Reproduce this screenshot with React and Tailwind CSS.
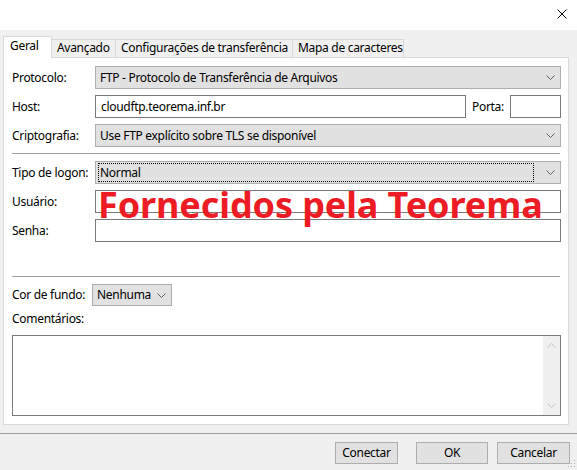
import React from "react";

const Chevron = ({ color = "#606060" }) => (
  <svg width="9" height="5" viewBox="0 0 9 5" className="shrink-0">
    <polyline points="0.5,0.5 4.5,4.5 8.5,0.5" fill="none" stroke={color} strokeWidth="1" />
  </svg>
);

function Select({ children, className = "", focused = false, h = "h-[23px]" }) {
  return (
    <div className={`flex items-center ${h} bg-[#e1e1e1] border border-[#adadad] ${className}`}>
      {focused ? (
        <div className="flex-1 h-[19px] ml-[2px] mr-[12px] border border-dotted border-black flex items-center pl-[1px] leading-none whitespace-nowrap">
          {children}
        </div>
      ) : (
        <div className="flex-1 pl-[4px] leading-none whitespace-nowrap">{children}</div>
      )}
      <div className="mr-[5px] flex items-center">
        <Chevron />
      </div>
    </div>
  );
}

function Input({ children, className = "" }) {
  return (
    <div className={`flex items-center h-[23px] bg-white border border-[#7a7a7a] pl-[5px] leading-none whitespace-nowrap ${className}`}>
      {children}
    </div>
  );
}

function Row({ label, children, className = "" }) {
  return (
    <div className={`flex items-center ${className}`}>
      <span className="w-[83px] shrink-0 leading-none whitespace-nowrap">{label}</span>
      {children}
    </div>
  );
}

export default function App() {
  return (
    <div
      className="relative w-[577px] h-[470px] bg-[#f0f0f0] overflow-hidden text-[12px] tracking-[-0.3px] text-black"
      style={{ fontFamily: '"Noto Sans", "Open Sans", sans-serif' }}
    >
      {/* title bar */}
      <div className="h-[30px] bg-white flex items-start justify-end pr-[10px] pt-[9px]">
        <svg width="10" height="10" viewBox="0 0 10 10">
          <path d="M0.5 0.5 L9.5 9.5 M9.5 0.5 L0.5 9.5" stroke="#000" strokeWidth="1" />
        </svg>
      </div>

      {/* tabs */}
      <div className="pl-[3px] pt-[6px] flex items-end h-[27px] whitespace-nowrap">
        <div className="relative z-10 -mb-px h-[22px] w-[49px] bg-white border border-[#d9d9d9] border-b-0 pl-[6px] pt-[3px] leading-none">
          Geral
        </div>
        <div className="h-[18px] w-[64px] border border-[#d9d9d9] border-l-0 border-b-0 pl-[5px] pt-[2px] leading-none">
          Avançado
        </div>
        <div className="h-[18px] w-[177px] border border-[#d9d9d9] border-l-0 border-b-0 pl-[5px] pt-[2px] leading-none">
          Configurações de transferência
        </div>
        <div className="h-[18px] w-[111px] border border-[#d9d9d9] border-l-0 border-b-0 pl-[5px] pt-[2px] leading-none">
          Mapa de caracteres
        </div>
      </div>

      {/* panel */}
      <div className="ml-[3px] w-[566px] h-[368px] bg-white border border-[#d9d9d9] pl-[8px] pr-[7px] pt-[8px] flex flex-col">
        <Row label="Protocolo:">
          <Select className="flex-1">FTP - Protocolo de Transferência de Arquivos</Select>
        </Row>
        <Row label="Host:" className="mt-[6px]">
          <Input className="w-[371px]">cloudftp.teorema.inf.br</Input>
          <span className="ml-[6px] w-[38px] leading-none">Porta:</span>
          <Input className="flex-1" />
        </Row>
        <Row label="Criptografia:" className="mt-[6px]">
          <Select className="flex-1">Use FTP explícito sobre TLS se disponível</Select>
        </Row>
        <div className="mt-[6px] h-px bg-[#a0a0a0] mr-[1px]" />
        <Row label="Tipo de logon:" className="mt-[7px]">
          <Select className="flex-1" focused>
            Normal
          </Select>
        </Row>
        <Row label="Usuário:" className="mt-[6px]">
          <Input className="flex-1" />
        </Row>
        <Row label="Senha:" className="mt-[6px]">
          <Input className="flex-1" />
        </Row>
        <div className="mt-[34px] h-px bg-[#a0a0a0] mr-[1px]" />
        <div className="mt-[7px] flex items-center">
          <span className="w-[80px] shrink-0 leading-none whitespace-nowrap">Cor de fundo:</span>
          <Select className="w-[80px]" h="h-[22px]">
            Nenhuma
          </Select>
        </div>
        <div className="mt-[5px] h-[16px] leading-[16px]">Comentários:</div>
        <div className="mt-[8px] h-[81px] border border-[#7a7a7a] bg-white flex justify-end">
          <div className="w-[17px] h-full bg-[#f0f0f0] flex flex-col items-center justify-between py-[7px]">
            <svg width="9" height="5" viewBox="0 0 9 5">
              <polyline points="0.5,4.5 4.5,0.5 8.5,4.5" fill="none" stroke="#c0c0c0" strokeWidth="1" />
            </svg>
            <svg width="9" height="5" viewBox="0 0 9 5">
              <polyline points="0.5,0.5 4.5,4.5 8.5,0.5" fill="none" stroke="#c0c0c0" strokeWidth="1" />
            </svg>
          </div>
        </div>
      </div>

      {/* footer */}
      <div className="mt-[8px] h-px bg-[#a0a0a0]" />
      <div className="flex pt-[8px] pl-[335px]">
        <div className="w-[63px] h-[22px] bg-[#e1e1e1] border border-[#adadad] flex items-center justify-center leading-none">
          Conectar
        </div>
        <div className="ml-[18px] w-[72px] h-[22px] bg-[#e1e1e1] border border-[#adadad] flex items-center justify-center leading-none">
          OK
        </div>
        <div className="ml-[9px] w-[73px] h-[22px] bg-[#e1e1e1] border border-[#adadad] flex items-center justify-center leading-none">
          Cancelar
        </div>
      </div>

      {/* resize grip */}
      <svg className="absolute right-[1px] bottom-[2px]" width="8" height="8" viewBox="0 0 8 8">
        <rect x="6" y="0" width="1" height="1" fill="#b0b0b0" />
        <rect x="3" y="3" width="1" height="1" fill="#b0b0b0" />
        <rect x="6" y="3" width="1" height="1" fill="#b0b0b0" />
        <rect x="0" y="6" width="1" height="1" fill="#b0b0b0" />
        <rect x="3" y="6" width="1" height="1" fill="#b0b0b0" />
        <rect x="6" y="6" width="1" height="1" fill="#b0b0b0" />
      </svg>

      {/* red overlay text */}
      <div
        className="absolute left-[98px] top-[187px] text-[36px] leading-[36px] font-bold tracking-[-0.1px] text-[#ed1c24] whitespace-nowrap"
        style={{ fontFamily: '"Noto Sans", "Open Sans", sans-serif' }}
      >
        Fornecidos pela Teorema
      </div>
    </div>
  );
}
